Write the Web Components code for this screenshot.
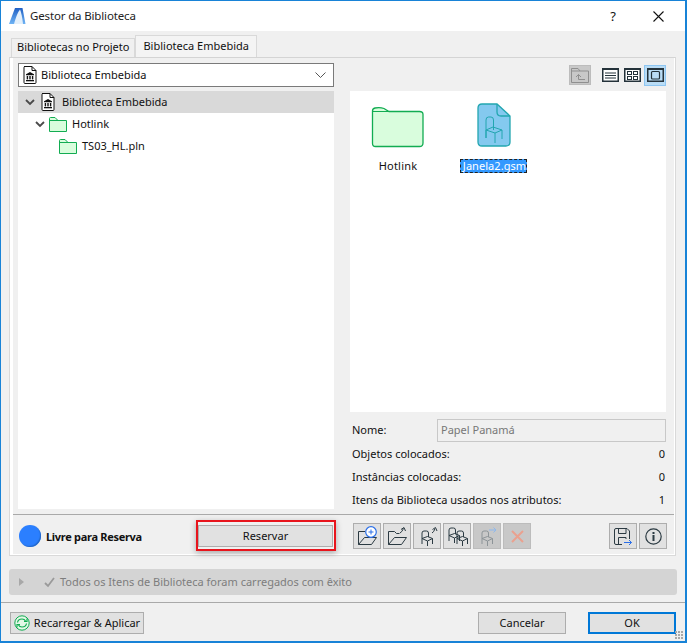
<!DOCTYPE html>
<html>
<head>
<meta charset="utf-8">
<title>Gestor da Biblioteca</title>
<style>
  html, body { margin: 0; padding: 0; background: #f0f0f0; }
  body { font: 11px "Noto Sans", sans-serif; color: #111; }
</style>
</head>
<body>
<lib-dialog heading="Gestor da Biblioteca">
  <lib-tab slot="tabs">Bibliotecas no Projeto</lib-tab>
  <lib-tab slot="tabs" active>Biblioteca Embebida</lib-tab>

  <lib-select slot="left" icon="doc">Biblioteca Embebida</lib-select>
  <lib-tree slot="left">
    <tree-row level="0" icon="doc" open selected>Biblioteca Embebida</tree-row>
    <tree-row level="1" icon="folder" open>Hotlink</tree-row>
    <tree-row level="2" icon="folder">TS03_HL.pln</tree-row>
  </lib-tree>

  <view-bar slot="right"></view-bar>
  <file-view slot="right">
    <file-item icon="bigfolder">Hotlink</file-item>
    <file-item icon="gsm" selected>Janela2.gsm</file-item>
  </file-view>
  <name-row slot="right" value="Papel Panamá">Nome:</name-row>
  <stat-row slot="right" value="0">Objetos colocados:</stat-row>
  <stat-row slot="right" value="0">Instâncias colocadas:</stat-row>
  <stat-row slot="right" value="1">Itens da Biblioteca usados nos atributos:</stat-row>

  <reserve-status slot="status">Livre para Reserva</reserve-status>
  <lib-btn slot="status" width="135" marked>Reservar</lib-btn>
  <icon-btn slot="tools" icon="open-add"></icon-btn>
  <icon-btn slot="tools" icon="open-up"></icon-btn>
  <icon-btn slot="tools" icon="chair-up"></icon-btn>
  <icon-btn slot="tools" icon="chairs"></icon-btn>
  <icon-btn slot="tools" icon="chair-go" disabled></icon-btn>
  <icon-btn slot="tools" icon="cross" disabled></icon-btn>
  <icon-btn slot="extra" icon="save"></icon-btn>
  <icon-btn slot="extra" icon="info"></icon-btn>

  <message-bar slot="message">Todos os Itens de Biblioteca foram carregados com êxito</message-bar>

  <lib-btn slot="foot-left" width="134" icon="reload">Recarregar &amp; Aplicar</lib-btn>
  <lib-btn slot="foot-right" width="88">Cancelar</lib-btn>
  <lib-btn slot="foot-right" width="88" primary>OK</lib-btn>
</lib-dialog>

<script>
const bank = (x, y) => `<g transform="translate(${x} ${y})" fill="#111" stroke="none">
  <path d="M4 0 8 2.200V3.200H0V2.200z"/><rect x=".7" y="4" width="1.400" height="3.400"/><rect x="3.300" y="4" width="1.400" height="3.400"/><rect x="5.900" y="4" width="1.400" height="3.400"/><rect x="0" y="8" width="8" height="1.300"/></g>`;

// 12x16 chair, legs down
const chair = (c, x, y) => `<g transform="translate(${x} ${y})" fill="none" stroke="${c}"><path d="M1 14V3Q1 1 3 1H5.500Q7.500 1 7.500 3V7"/><path d="M1 8.500 6.500 6.500 11.500 8.500 6.500 11z"/><path d="M6.500 11V16M11.500 8.500V14"/></g>`;

// icon name -> [width, height, svg body]
const ICONS = {
  doc: [14, 18, `<path d="M1 .5H9L13 4.500V16.500Q13 17.500 12 17.500H2Q1 17.500 1 16.500V1.500Q1 .5 2 .5z" fill="#fff" stroke="#111"/><path d="M9 .5V4.500H13" fill="none" stroke="#111"/>${bank(3, 6)}`],
  folder: [18, 15, `<path d="M.5 14V1.500Q.5.5 1.500.5H6L9 3.500H17.500V14.500H.5z" fill="#d9fddd" stroke="#12ac52"/><path d="M.5 3.500H9" fill="none" stroke="#12ac52"/>`],
  bigfolder: [52, 40, `<path d="M.5 36.500V4Q.5 1.500 3 1 8 0 12 1.500L17 4.500H47.500Q51 4.500 51 7.500V36Q51 39.500 47.500 39.500H3.500Q.5 39.500.5 36.500z" fill="#d9fddd" stroke="#12ac52" stroke-width="1.300"/><path d="M.5 4.500H17" fill="none" stroke="#12ac52"/>`],
  gsm: [34, 44, `<path d="M5 1H20L33 13V39Q33 43 29 43H5Q1 43 1 39V5Q1 1 5 1z" fill="#84c9ef" stroke="#22a6b0" stroke-width="1.300"/><path d="M20 1V9Q20 13 24 13H33" fill="none" stroke="#22a6b0" stroke-width="1.300"/><g transform="translate(8 12)" fill="none" stroke="#22a6b0"><path d="M1 23V5Q1 2 3.500 2H6Q8.500 2 8.500 5V15"/><path d="M1 15 8 12 17 15 10 18z"/><path d="M10 18V28M17 15V24M1 15V23"/></g>`],
  'open-add': [24, 22, `<path d="M3.500 19.500V6.500H10" fill="none" stroke="#2b3a42"/><path d="M3.500 19.500 9.500 12.500H21.500L16.500 19.500z" fill="none" stroke="#2b3a42"/><circle cx="16" cy="7" r="5.300" fill="#fff" stroke="#2b6fe8" stroke-width="1.200"/><path d="M16 4.500V9.500M13.500 7H18.500" stroke="#2b6fe8"/>`],
  'open-up': [24, 22, `<path d="M3.500 19.500V6.500H9.500L11.500 8.500H14.500" fill="none" stroke="#2b3a42"/><path d="M3.500 19.500 9.500 12.500H21.500L16.500 19.500z" fill="none" stroke="#2b3a42"/><path d="M15 8Q17 7 18.500 3.500M16 4.500 19 2.500 20.500 6" fill="none" stroke="#2b3a42"/>`],
  'chair-up': [24, 22, `${chair('#2b3a42', 6, 5)}<path d="M17 8Q19 7 20 3.500M17.500 4.500 20.500 2.500 22 6" fill="none" stroke="#2b3a42"/>`],
  chairs: [26, 22, `${chair('#2b3a42', 4, 2)}${chair('#2b3a42', 12, 5)}`],
  'chair-go': [24, 22, `${chair('#8d9498', 6, 5)}<path d="M14 5H21M18.500 2.500 21 5 18.500 7.500" fill="none" stroke="#8db8ee"/>`],
  cross: [13, 13, `<path d="M1 1 12 12M12 1 1 12" stroke="#eaa18f" stroke-width="2"/>`],
  save: [18, 17, `<path d="M15.500 11V3L13 .5H2Q.5.5.5 2V15Q.5 16.500 2 16.500H8" fill="none" stroke="#2b3a42"/><path d="M4.500.5V5.500H12V.5M4.500 16.500V9.500H12V11" fill="none" stroke="#2b3a42"/><path d="M10 14.500H17.500M15 12 17.500 14.500 15 17" fill="none" stroke="#2b6fe8"/>`],
  info: [17, 17, `<circle cx="8.500" cy="8.500" r="7.700" fill="none" stroke="#2b3a42" stroke-width="1.200"/><rect x="7.500" y="7" width="2" height="6" fill="#2b3a42"/><rect x="7.500" y="4" width="2" height="2" fill="#2b3a42"/>`],
  reload: [16, 16, `<circle cx="8" cy="8" r="7.200" fill="#e3f8e6" stroke="#12ac52"/><path d="M3.500 7.500Q4 4 8 4Q10.500 4 11.500 6M12.500 8.500Q12 12 8 12Q5.500 12 4.500 10" fill="none" stroke="#12ac52" stroke-width="1.200"/><path d="M10 6.500H13V3.500M6 9.500H3V12.500" fill="none" stroke="#12ac52" stroke-width="1.200"/>`],
  chevron: [10, 6, `<path d="M1 1 5 5 9 1" fill="none" stroke="#4a4a4a" stroke-width="1.800"/>`],
  'view-up': [18, 15, `<path d="M.5 14.500V.5H7L9 3H17.500V14.500z" fill="none" stroke="#8f8f8f"/><path d="M.5 3H9M7.500 6.500V11.500H14M5 9 7.500 6.500 10 9" fill="none" stroke="#8f8f8f"/>`],
  'view-list': [17, 14, `<rect x=".75" y=".75" width="15.500" height="12.500" fill="#fff" stroke="#24323a" stroke-width="1.500"/><rect x="0" y="0" width="17" height="2" fill="#24323a"/><path d="M3 5H14M3 7.500H14M3 10H14" stroke="#24323a"/>`],
  'view-grid': [17, 14, `<rect x=".75" y=".75" width="15.500" height="12.500" fill="#fff" stroke="#24323a" stroke-width="1.500"/><rect x="0" y="0" width="17" height="2" fill="#24323a"/><rect x="3.500" y="3.500" width="4" height="3" fill="none" stroke="#24323a"/><rect x="9.500" y="3.500" width="4" height="3" fill="none" stroke="#24323a"/><rect x="3.500" y="8.500" width="4" height="3" fill="none" stroke="#24323a"/><rect x="9.500" y="8.500" width="4" height="3" fill="none" stroke="#24323a"/>`],
  'view-large': [17, 14, `<rect x=".75" y=".75" width="15.500" height="12.500" fill="none" stroke="#24323a" stroke-width="1.500"/><rect x="0" y="0" width="17" height="2" fill="#24323a"/><rect x="4.500" y="3.500" width="8" height="7.500" rx="1" fill="none" stroke="#24323a" stroke-width="1.200"/>`],
  logo: [17, 17, `<defs><linearGradient id="g" x1="0" y1="0" x2="0" y2="1"><stop offset="0" stop-color="#1f5fc4"/><stop offset="1" stop-color="#6fb4f5"/></linearGradient></defs><path d="M0 16 6 0H13.500L16.500 16z" fill="url(#g)"/><path d="M5 16Q8 5 11 1.500 13 6 14 16z" fill="#e4f0fb"/>`],
  close: [11, 11, `<path d="M.5.5 10.500 10.500M10.500.5.5 10.500" stroke="#111" stroke-width="1.100"/>`],
  check: [11, 10, `<path d="M1 6 4 9 10 1" fill="none" stroke="#9a9a9a" stroke-width="1.800"/>`],
};

class LibIcon extends HTMLElement {
  constructor() {
    super();
    this.attachShadow({ mode: 'open' });
  }

  connectedCallback() {
    const [w, h, body] = ICONS[this.getAttribute('name')];
    this.shadowRoot.innerHTML = `<style>
        :host { display: block; flex: none; width: ${w}px; height: ${h}px; }
        svg { display: block; overflow: visible; }
      </style>
      <svg width="${w}" height="${h}" viewBox="0 0 ${w} ${h}">${body}</svg>`;
  }
}
customElements.define('lib-icon', LibIcon);

// simple helper, most elements here only have a static shadow tree
function define(tag, render) {
  customElements.define(tag, class extends HTMLElement {
    constructor() {
      super();
      this.attachShadow({ mode: 'open' });
    }

    connectedCallback() {
      this.shadowRoot.innerHTML = render(this);
    }
  });
}

define('lib-dialog', (el) => `<style>
    :host {
      display: flex; flex-direction: column; position: relative; box-sizing: border-box;
      width: 687px; height: 643px; background: #f0f0f0;
      border: solid #1883d7; border-width: 1px 2px 2px 1px;
    }
    .title { flex: none; height: 30px; background: #fff; display: flex; align-items: center; padding-left: 8px; font-size: 11.5px; letter-spacing: -.15px; }
    .title span { margin-left: 4px; color: #222; padding-bottom: 1px; }
    .help { margin-left: auto; width: 20px; text-align: center; font-size: 13px; color: #111; }
    .x { margin: 0 21px 0 30px; }
    .tabs { display: flex; align-items: flex-end; height: 22px; margin-top: 4px; padding-left: 10px; }
    .panel { flex: none; box-sizing: border-box; width: 667px; height: 499px; margin-left: 8px; border: 1px solid #d9d9d9; border-top-color: #d4d4d4; display: flex; flex-direction: column; background: #f0f0f0; box-shadow: inset 3px 0 #fff, inset -1px 0 #fff, inset 0 -1px #fff; }
    .columns { flex: none; height: 456px; box-sizing: border-box; display: grid; grid-template-columns: 316px 316px; column-gap: 16px; padding: 5px 0 0 8px; }
    .col { display: flex; flex-direction: column; }
    .bottom { flex: none; box-sizing: border-box; height: 41px; padding-top: 2px; margin: 0 1px 0 3px; border-top: 1px solid #a9a9a9; display: flex; align-items: center; }
    .status { display: flex; align-items: center; padding-left: 6px; }
    .tools { display: flex; gap: 2px; margin-left: 20px; }
    .extra { display: flex; gap: 2px; margin-left: auto; margin-right: 7px; }
    .msg { margin: 13px 8px 0 8px; }
    .foot { margin-top: 7px; border-top: 1px solid #a9a9a9; flex: 1; display: flex; padding: 9px 9px 0 9px; box-sizing: border-box; }
    .foot-right { margin-left: auto; display: flex; gap: 22px; }
    .grip { position: absolute; right: 1px; bottom: 1px; width: 9px; height: 9px;
      background: radial-gradient(circle at 1px 1px, #a8a8a8 1px, transparent 1.2px) 0 0 / 3px 3px; }
  </style>
  <div class="title">
    <lib-icon name="logo"></lib-icon><span>${el.getAttribute('heading')}</span>
    <div class="help">?</div><lib-icon class="x" name="close"></lib-icon>
  </div>
  <div class="tabs"><slot name="tabs"></slot></div>
  <div class="panel">
    <div class="columns">
      <div class="col"><slot name="left"></slot></div>
      <div class="col"><slot name="right"></slot></div>
    </div>
    <div class="bottom">
      <div class="status"><slot name="status"></slot></div>
      <div class="tools"><slot name="tools"></slot></div>
      <div class="extra"><slot name="extra"></slot></div>
    </div>
  </div>
  <div class="msg"><slot name="message"></slot></div>
  <div class="foot">
    <slot name="foot-left"></slot>
    <div class="foot-right"><slot name="foot-right"></slot></div>
  </div>
  <div class="grip"></div>`);

define('lib-tab', (el) => {
  const active = el.hasAttribute('active');
  return `<style>
    :host { display: block; box-sizing: border-box; border: 1px solid #d9d9d9; border-bottom: 0;
      height: ${active ? 23 : 19}px; padding: 0 ${active ? 7 : 5}px; line-height: ${active ? 19 : 16}px;
      background: ${active ? '#f4f4f4' : '#f0f0f0'}; ${active ? 'margin-bottom: -1px;' : ''} }
  </style><slot></slot>`;
});

define('lib-select', (el) => `<style>
    :host { display: flex; align-items: center; flex: none; box-sizing: border-box; height: 24px; background: #fff; border: 1px solid #7a7a7a; padding: 0 7px 0 4px; }
    .t { margin-left: 4px; flex: 1; padding-bottom: 2px; }
    .c { flex: none; }
    svg { display: block; }
  </style>
  <lib-icon name="${el.getAttribute('icon')}"></lib-icon>
  <span class="t"><slot></slot></span>
  <svg class="c" width="11" height="6" viewBox="0 0 11 6"><path d="M.5.5 5.500 5.500 10.500.5" fill="none" stroke="#555"/></svg>`);

define('lib-tree', () => `<style>
    :host { display: block; flex: none; height: 418px; margin-top: 4px; background: #fff; }
  </style><slot></slot>`);

define('tree-row', (el) => {
  const level = +el.getAttribute('level');
  const sel = el.hasAttribute('selected');
  return `<style>
    :host { display: flex; align-items: center; height: 22px; box-sizing: border-box; background: ${sel ? '#d9d9d9' : 'transparent'};
      padding-left: ${[7, 17, 41][level]}px; }
    .arrow { width: 10px; margin-right: ${level ? 4 : 6}px; }
    span { margin-left: ${level ? 5 : 7}px; padding-bottom: 2px; }
  </style>
  ${el.hasAttribute('open') ? '<lib-icon class="arrow" name="chevron"></lib-icon>' : ''}
  <lib-icon name="${el.getAttribute('icon')}"></lib-icon>
  <span><slot></slot></span>`;
});

define('view-bar', () => `<style>
    :host { display: flex; align-items: center; flex: none; height: 24px; justify-content: flex-end; }
    .up { box-sizing: border-box; width: 22px; height: 20px; background: #c8c8c8; border: 1px solid #bcbcbc; display: flex; align-items: center; justify-content: center; margin-right: 11px; }
    .v { margin-right: 5px; }
    .on { box-sizing: border-box; width: 22px; height: 21px; background: #b9dcf5; border: 1px solid #8ec6f2; display: flex; align-items: center; justify-content: center; margin-left: -2px; }
  </style>
  <div class="up"><lib-icon name="view-up"></lib-icon></div>
  <lib-icon class="v" name="view-list"></lib-icon>
  <lib-icon class="v" name="view-grid"></lib-icon>
  <div class="on"><lib-icon name="view-large"></lib-icon></div>`);

define('file-view', () => `<style>
    :host { display: flex; align-items: flex-start; flex: none; height: 321px; margin-top: 4px; background: #fff; letter-spacing: .2px; }
  </style><slot></slot>`);

define('file-item', (el) => {
  const sel = el.hasAttribute('selected');
  return `<style>
    :host { display: flex; flex-direction: column; align-items: center; width: 96px; padding-top: 12px; }
    .i { height: 44px; display: flex; align-items: flex-end; }
    .l { margin-top: 12px; height: 14px; line-height: 14px; }
    .sel { background: #3399ff; color: #fff; outline: 1px dashed #222; outline-offset: -1px; padding: 0 1px 0 3px; letter-spacing: .05px; margin-left: -1px; }
  </style>
  <div class="i"><lib-icon name="${el.getAttribute('icon')}"></lib-icon></div>
  <div class="l ${sel ? 'sel' : ''}"><slot></slot></div>`;
});

define('name-row', (el) => `<style>
    :host { display: flex; flex: none; align-items: center; height: 23px; margin-top: 7px; padding-left: 2px; }
    .n { padding-bottom: 2px; }
    .f { box-sizing: border-box; margin-left: auto; width: 229px; height: 23px; border: 1px solid #c8c8c8; padding-left: 3px; line-height: 20px; color: #777; background: #f0f0f0; }
  </style><span class="n"><slot></slot></span><div class="f">${el.getAttribute('value')}</div>`);

define('stat-row', (el) => `<style>
    :host { display: flex; flex: none; align-items: center; justify-content: space-between; height: 23px; padding: 0 1px 0 2px; }
  </style><slot></slot><span>${el.getAttribute('value')}</span>`);

define('reserve-status', () => `<style>
    :host { display: flex; align-items: center; width: 179px; font-weight: 700; letter-spacing: -.3px; }
    .dot { width: 22px; height: 22px; border-radius: 50%; background: #2b7fff; margin-right: 5px; flex: none; box-shadow: inset -1px -1px 1px #2468c8; }
  </style><div class="dot"></div><slot></slot>`);

define('lib-btn', (el) => {
  const primary = el.hasAttribute('primary');
  const marked = el.hasAttribute('marked');
  const icon = el.getAttribute('icon');
  return `<style>
    :host { display: flex; position: relative; align-items: center; justify-content: center; box-sizing: border-box; flex: none;
      width: ${el.getAttribute('width')}px; height: 22px; background: #e1e1e1; padding-bottom: 1px;
      border: ${primary ? '2px solid #0078d7' : '1px solid #adadad'}; ${primary ? 'outline: 1px solid #0078d7; outline-offset: -1px;' : ''} }
    lib-icon { margin-right: 4px; }
    .mark { position: absolute; left: -3px; right: -4px; top: -6px; bottom: -5px; border: 2px solid #e8141c; box-shadow: 0 2px 6px rgba(0,0,0,.3); pointer-events: none; }
  </style>
  ${icon ? `<lib-icon name="${icon}"></lib-icon>` : ''}<slot></slot>${marked ? '<div class="mark"></div>' : ''}`;
});

define('icon-btn', (el) => `<style>
    :host { display: flex; align-items: center; justify-content: center; box-sizing: border-box; width: 28px; height: 26px;
      background: ${el.hasAttribute('disabled') ? '#c8c8c8' : '#e1e1e1'}; border: 1px solid ${el.hasAttribute('disabled') ? '#bcbcbc' : '#adadad'}; }
  </style><lib-icon name="${el.getAttribute('icon')}"></lib-icon>`);

define('message-bar', () => `<style>
    :host { display: flex; align-items: center; box-sizing: border-box; height: 26px; background: #d4d4d4; border-radius: 3px; color: #7d7d7d; padding-left: 10px; }
    .tri { width: 0; height: 0; border: 4px solid transparent; border-left: 5px solid #a8a8a8; border-right: 0; }
    lib-icon { margin: 0 5px 0 20px; }
    span { padding-bottom: 2px; }
  </style><div class="tri"></div><lib-icon name="check"></lib-icon><span><slot></slot></span>`);
</script>
</body>
</html>
